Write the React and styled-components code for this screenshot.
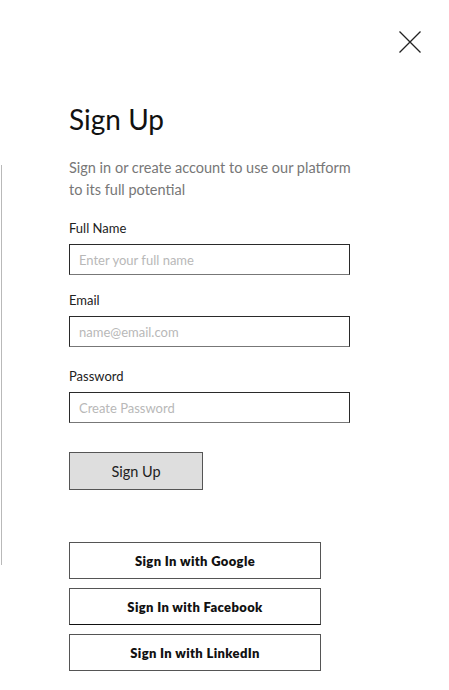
import React from 'react';
import styled, { createGlobalStyle } from 'styled-components';

const GlobalStyle = createGlobalStyle`
  html, body {
    margin: 0;
    padding: 0;
    background: #ffffff;
  }
  body {
    font-family: Lato, "Noto Sans", sans-serif;
    color: #111;
  }
`;

const Layout = styled.div`
  display: flex;
  width: 449px;
  min-height: 690px;
`;

// thin grey bar on the left edge of the panel
const Rail = styled.div`
  flex: 0 0 1px;
  width: 1px;
  height: 400px;
  margin: 165px 0 0 1px;
  background: #b9b9b9;
`;

const Content = styled.div`
  flex: 1;
  display: flex;
  flex-direction: column;
  padding: 0 0 0 67px;
`;

const TopBar = styled.div`
  display: flex;
  justify-content: flex-end;
  padding: 30px 27px 0 0;
  margin-left: -69px;
`;

const CloseButton = styled.button`
  width: 24px;
  height: 24px;
  padding: 0;
  border: none;
  background: none;
  cursor: pointer;
  display: flex;
`;

const Title = styled.h1`
  margin: 48px 0 0;
  font-size: 28px;
  line-height: 34px;
  font-weight: 400;
  color: #111;
`;

const Subtitle = styled.p`
  margin: 21px 0 0;
  width: 290px;
  font-size: 14.5px;
  line-height: 22px;
  color: #777;
`;

const Form = styled.form`
  display: flex;
  flex-direction: column;
  margin-top: 18px;
`;

const Field = styled.label`
  display: flex;
  flex-direction: column;
  margin-bottom: ${(p) => p.gap || 0}px;
`;

const LabelText = styled.span`
  font-size: 13px;
  line-height: 18px;
  color: #222;
  margin-bottom: 7px;
`;

const Input = styled.input`
  box-sizing: border-box;
  width: 281px;
  height: 31px;
  border: 1px solid #2a2a2a;
  border-bottom-color: #777;
  padding: 0 9px;
  font-family: Lato, "Noto Sans", sans-serif;
  font-size: 13px;
  color: #333;
  outline: none;
  &::placeholder {
    color: #b8b8b8;
  }
`;

const SubmitButton = styled.button`
  box-sizing: border-box;
  width: 134px;
  height: 38px;
  margin-top: 29px;
  border: 1px solid #555;
  background: #dedede;
  font-family: Lato, "Noto Sans", sans-serif;
  font-size: 14.5px;
  color: #222;
  cursor: pointer;
`;

const SocialList = styled.div`
  display: flex;
  flex-direction: column;
  gap: 9px;
  margin-top: 52px;
`;

const SocialButton = styled.button`
  box-sizing: border-box;
  width: 252px;
  height: 37px;
  border: 1px solid #555;
  border-bottom-color: ${(p) => (p.dark ? '#111' : '#555')};
  background: #fff;
  font-family: Lato, "Noto Sans", sans-serif;
  font-size: 13px;
  font-weight: 800;
  letter-spacing: 0.35px;
  color: #111;
  cursor: pointer;
`;

const fields = [
  { label: 'Full Name', type: 'text', placeholder: 'Enter your full name', gap: 16 },
  { label: 'Email', type: 'email', placeholder: 'name@email.com', gap: 20 },
  { label: 'Password', type: 'password', placeholder: 'Create Password', gap: 0 },
];

const socials = ['Google', 'Facebook', 'LinkedIn'];

export default function App() {
  return (
    <>
      <GlobalStyle />
      <Layout>
        <Rail />
        <Content>
          <TopBar>
            <CloseButton aria-label="Close">
              <svg width="24" height="24" viewBox="0 0 24 24">
                <path d="M1.5 1.5 L22.5 22.5 M22.5 1.5 L1.5 22.5" stroke="#222" strokeWidth="1.3" fill="none" />
              </svg>
            </CloseButton>
          </TopBar>
          <Title>Sign Up</Title>
          <Subtitle>Sign in or create account to use our platform to its full potential</Subtitle>
          <Form onSubmit={(e) => e.preventDefault()}>
            {fields.map((f) => (
              <Field key={f.label} gap={f.gap}>
                <LabelText>{f.label}</LabelText>
                <Input type={f.type} placeholder={f.placeholder} />
              </Field>
            ))}
            <SubmitButton type="submit">Sign Up</SubmitButton>
          </Form>
          <SocialList>
            {socials.map((s, i) => (
              <SocialButton key={s} dark={i === 1}>Sign In with {s}</SocialButton>
            ))}
          </SocialList>
        </Content>
      </Layout>
    </>
  );
}
